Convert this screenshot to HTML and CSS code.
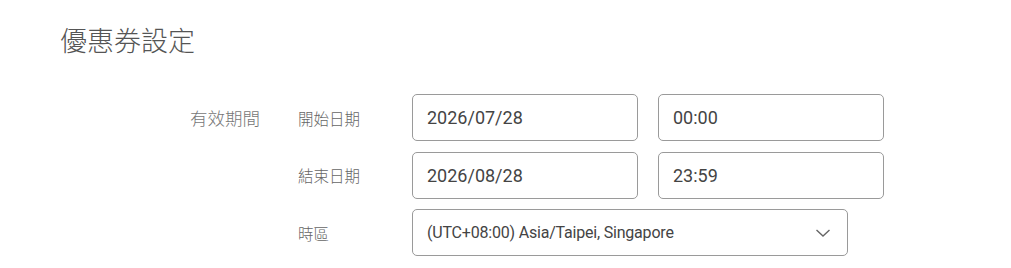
FILE: index.html
```html
<!DOCTYPE html>
<html lang="zh-Hant">
<head>
<meta charset="utf-8">
<title>優惠券設定</title>
<link rel="stylesheet" href="styles.css">
</head>
<body>
<div class="page">
  <h1 class="title">優惠券設定</h1>
  <div class="form">
    <div class="group-label">有效期間</div>
    <div class="rows">
      <div class="row">
        <div class="field-label">開始日期</div>
        <div class="inputs">
          <div class="input">2026/07/28</div>
          <div class="input">00:00</div>
        </div>
      </div>
      <div class="row">
        <div class="field-label">結束日期</div>
        <div class="inputs">
          <div class="input">2026/08/28</div>
          <div class="input">23:59</div>
        </div>
      </div>
      <div class="row">
        <div class="field-label">時區</div>
        <div class="select">
          <span class="select-text">(UTC+08:00) Asia/Taipei, Singapore</span>
          <svg class="chevron" width="16" height="10" viewBox="0 0 16 10"><polyline points="1.5,2 8,8 14.5,2" fill="none" stroke="#666" stroke-width="1.4"/></svg>
        </div>
      </div>
    </div>
  </div>
</div>
</body>
</html>
```
FILE: styles.css
```css
html, body {
  margin: 0;
  padding: 0;
  background: #fff;
}
body {
  font-family: Roboto, "Noto Sans CJK TC", sans-serif;
  color: #444;
}
.page {
  padding: 20px 0 0 60px;
}
.title {
  margin: 0;
  font-family: "Noto Sans CJK TC", sans-serif;
  font-weight: 300;
  font-size: 27px;
  line-height: 40px;
  color: #555;
}
.form {
  display: flex;
  margin-top: 34px;
  margin-left: 130px;
}
.group-label {
  width: 108px;
  font-family: "Noto Sans CJK TC", sans-serif;
  font-weight: 300;
  font-size: 17.5px;
  line-height: 47px;
  color: #777;
}
.rows {
  display: flex;
  flex-direction: column;
  gap: 10.5px;
}
.row {
  display: flex;
  align-items: center;
  height: 47px;
}
.field-label {
  width: 114px;
  font-family: "Noto Sans CJK TC", sans-serif;
  font-weight: 300;
  font-size: 15.5px;
  color: #666;
}
.inputs {
  display: flex;
  gap: 20px;
}
.input {
  box-sizing: border-box;
  width: 226px;
  height: 47px;
  border: 1px solid #9a9a9a;
  border-radius: 5px;
  padding: 0 14px;
  display: flex;
  align-items: center;
  font-size: 18px;
  color: #444;
}
.select {
  box-sizing: border-box;
  width: 436px;
  height: 47px;
  border: 1px solid #9a9a9a;
  border-radius: 5px;
  padding: 0 16px 0 14px;
  display: flex;
  align-items: center;
  justify-content: space-between;
  font-size: 16px;
  letter-spacing: -0.2px;
  color: #444;
}
.chevron {
  display: block;
}
```
